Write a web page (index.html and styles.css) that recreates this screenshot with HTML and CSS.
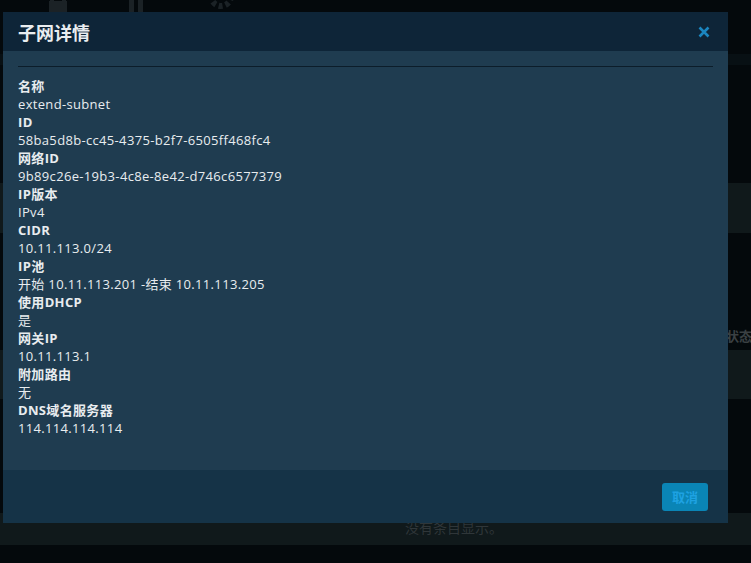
FILE: index.html
```html
<!DOCTYPE html>
<html lang="zh-CN">
<head>
	<meta charset="utf-8" />
	<title>子网详情</title>
	<link rel="stylesheet" href="styles.css">
</head>
<body>

    <div class="page">

        <div class="topbar">
            <svg class="tool" width="24" height="24" viewBox="0 0 24 24"><path d="M6 11V7a6 6 0 0 1 12 0v4" fill="none" stroke="#1b2226" stroke-width="4"/><rect x="3" y="11" width="18" height="12" fill="#1b2226"/></svg>
            <svg class="tool" width="24" height="24" viewBox="0 0 24 24"><rect x="4" y="0" width="5" height="24" fill="#1b2226"/><rect x="13" y="0" width="5" height="24" fill="#1b2226"/></svg>
            <svg class="tool" width="34" height="24" viewBox="0 0 34 24"><circle cx="17" cy="6" r="10" fill="none" stroke="#1b2226" stroke-width="6" stroke-dasharray="4 3"/></svg>
        </div>
        <div class="subbar"></div>

        <div class="strip strip-panel"></div>

        <div class="thead"><span>端口状态</span></div>
        <div class="strip strip-row"></div>

        <div class="strip strip-empty">没有条目显示。</div>

    </div>

    <div class="modal">

        <div class="modal-header">
            <h3>子网详情</h3>
            <button class="close">
                <svg width="12" height="12" viewBox="0 0 12 12"><path d="M1.5 1.5l9 9M10.5 1.5l-9 9" stroke="#1b86c0" stroke-width="2.6"/></svg>
            </button>
        </div>

        <div class="modal-body">
            <hr>
            <dl>
                <dt>名称</dt>
                <dd>extend-subnet</dd>
                <dt>ID</dt>
                <dd>58ba5d8b-cc45-4375-b2f7-6505ff468fc4</dd>
                <dt>网络ID</dt>
                <dd>9b89c26e-19b3-4c8e-8e42-d746c6577379</dd>
                <dt>IP版本</dt>
                <dd>IPv4</dd>
                <dt>CIDR</dt>
                <dd>10.11.113.0/24</dd>
                <dt>IP池</dt>
                <dd>开始 10.11.113.201 -结束 10.11.113.205</dd>
                <dt>使用DHCP</dt>
                <dd>是</dd>
                <dt>网关IP</dt>
                <dd>10.11.113.1</dd>
                <dt>附加路由</dt>
                <dd>无</dd>
                <dt>DNS域名服务器</dt>
                <dd>114.114.114.114</dd>
            </dl>
        </div>

        <div class="modal-footer">
            <button class="btn-cancel">取消</button>
        </div>

    </div>

</body>
</html>
```

FILE: styles.css
```css
        body{
            margin: 0;
            background: #04090c;
            font-family: "Open Sans", "Noto Sans CJK SC", sans-serif;
            font-size: 13px;
            color: #e8ecef;
        }

        .page{
            height: 563px;
            overflow: hidden;
        }

        .topbar{
            height: 54px;
            display: flex;
            align-items: flex-start;
            gap: 55px;
            padding-left: 46px;
        }
        .tool{
            margin-top: -10px;
        }

        .subbar{
            height: 11px;
            background: #081014;
        }

        .strip{
            background: #10191b;
        }
        .strip-panel{
            margin-top: 118px;
            height: 50px;
        }

        .thead{
            margin-top: 87px;
            height: 30px;
            padding-left: 700px;
            white-space: nowrap;
            overflow: hidden;
            font-weight: bold;
            font-size: 13px;
            color: #3a4043;
            line-height: 32px;
        }
        .strip-row{
            height: 49px;
        }

        .strip-empty{
            margin-top: 114px;
            height: 32px;
            line-height: 30px;
            padding-left: 405px;
            font-size: 14px;
            color: #2f3639;
        }

        /* dialog */
        .modal{
            position: absolute;
            left: 3px;
            top: 12px;
            width: 725px;
            background: #1f3c50;
        }

        .modal-header{
            height: 39px;
            background: #0e2538;
            display: flex;
            align-items: center;
            justify-content: space-between;
            padding: 0 18px 0 15px;
        }
        .modal-header h3{
            margin: 0;
            font-size: 18px;
            font-weight: bold;
            color: #e9edf0;
        }
        .close{
            background: none;
            border: 0;
            padding: 0;
            display: flex;
        }

        .modal-body{
            padding: 15px 15px 33px 15px;
        }
        .modal-body hr{
            margin: 0 0 10px 0;
            border: 0;
            border-top: 1px solid #0c1d2a;
        }

        dl{
            margin: 0;
            line-height: 18px;
            letter-spacing: 0.33px;
        }
        dt{
            font-weight: bold;
        }
        dd{
            margin: 0;
        }

        .modal-footer{
            height: 53px;
            background: #153347;
            display: flex;
            align-items: center;
            justify-content: flex-end;
            padding: 0 20px;
        }
        .btn-cancel{
            width: 46px;
            height: 28px;
            border: 0;
            border-radius: 3px;
            background: #0a85b6;
            color: #1ea2e2;
            font-family: "Open Sans", "Noto Sans CJK SC", sans-serif;
            font-size: 13px;
            font-weight: bold;
            padding: 0;
        }
```
